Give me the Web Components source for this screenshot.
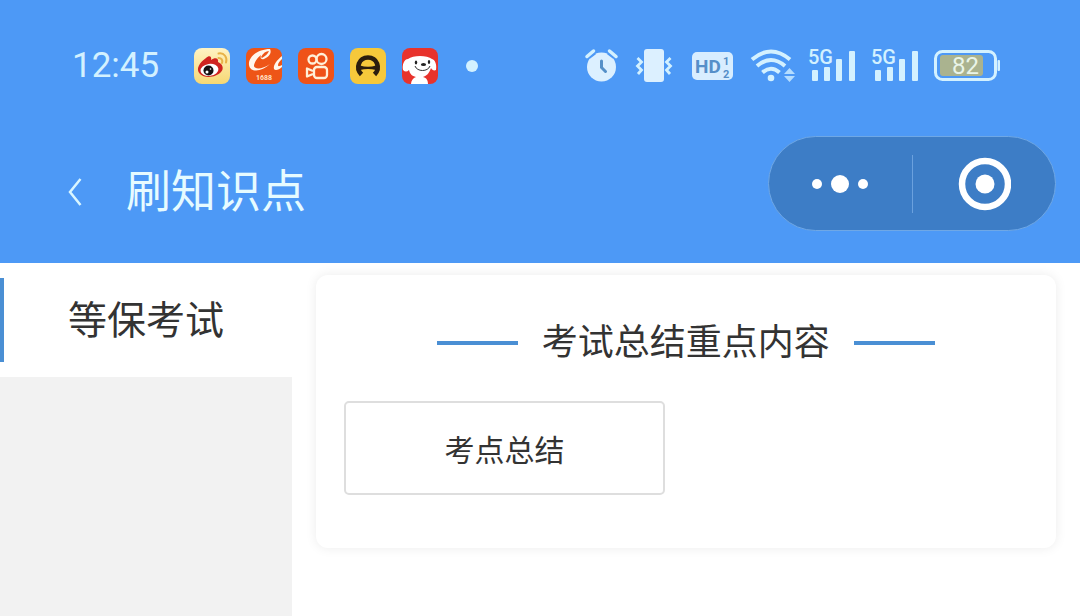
<!DOCTYPE html>
<html lang="zh-CN">
<head>
<meta charset="utf-8">
<meta name="viewport" content="width=device-width, initial-scale=1">
<title>刷知识点</title>
<style>
  :root { --brand: #4d99f6; --ice: #d3f1ff; --accent: #4a8fd4; --ink: #333333; }
  body { margin: 0; background: #ffffff; color: var(--ink); font-family: Roboto, "Noto Sans CJK SC", sans-serif; }
</style>
</head>
<body>
<study-page>
  <status-bar slot="top" time="12:45"></status-bar>
  <nav-header slot="top">刷知识点</nav-header>
  <side-menu slot="side"><side-item>等保考试</side-item></side-menu>
  <topic-card>
    <span slot="heading">考试总结重点内容</span>
    <topic-button>考点总结</topic-button>
  </topic-card>
</study-page>

<script>
const define = (name, html) => {
  const template = document.createElement('template');
  template.innerHTML = html;
  customElements.define(name, class extends HTMLElement {
    constructor() {
      super();
      this.attachShadow({ mode: 'open' }).append(template.content.cloneNode(true));
    }
    connectedCallback() {
      const time = this.shadowRoot.querySelector('time');
      if (time) time.textContent = this.getAttribute('time');
    }
  });
};

define('study-page', `
  <style>
    :host { display: flex; flex-direction: column; min-height: 100vh; }
    header { background: var(--brand); }
    .body { flex: 1; display: flex; }
    aside { flex: 0 0 27%; background: #f2f2f2; }
    main { flex: 1; min-width: 0; padding: 12px 24px; }
  </style>
  <header><slot name="top"></slot></header>
  <div class="body"><aside><slot name="side"></slot></aside><main><slot></slot></main></div>
`);

define('app-icons', `
  <style>
    :host { display: flex; gap: 16px; }
    svg { display: block; width: 36px; height: 36px; }
    text { font: 700 7px Roboto, sans-serif; }
  </style>
  <svg viewBox="0 0 36 36" aria-label="微博">
    <defs><linearGradient id="g" x1="0" y1="0" x2="0" y2="1"><stop offset="0" stop-color="#fff3c4"/><stop offset="1" stop-color="#f6d873"/></linearGradient></defs>
    <rect width="36" height="36" rx="8" fill="url(#g)"/>
    <path d="M12 10c3-3 6-2 5 2 4-3 8-2 7 2 5 2 6 7 3 10-4 5-16 7-21 2-5-5 0-12 6-16z" fill="#d0231f"/>
    <ellipse cx="15.500" cy="22" rx="9" ry="6" fill="#fff" transform="rotate(-8 15 22)"/>
    <circle cx="14.500" cy="22.500" r="5" fill="#151012"/>
    <circle cx="13" cy="24" r="1.500" fill="#fff"/><circle cx="16.500" cy="21" r=".8" fill="#fff"/>
    <path d="M24.500 5.500c6-1 9 4 7.500 9M24.500 10c3 0 4.500 2 3.500 5" fill="none" stroke="#e8b247" stroke-width="2" stroke-linecap="round"/>
  </svg>
  <svg viewBox="0 0 36 36" aria-label="1688">
    <rect width="36" height="36" rx="8" fill="#ee5517"/>
    <path d="M24 1C12 1 2 9 3 17c1 8 13 7 21-1-7 5-15 6-16 2 0-3 3-8 7-11-1 3 0 5 3 4 5-2 8-6 6-10z" fill="#fff7ec"/>
    <path d="M15 9c2-4 5-6 8-6-1 3-4 5-7 7z" fill="#ee5517"/>
    <path d="M36 8c-5 4-9 9-8 13 1 2 5 1 8-2v-2c-2 1-4 2-4 0 0-2 2-4 4-6z" fill="#fff7ec"/>
    <text x="18" y="32" text-anchor="middle" fill="#ffe1c8">1688</text>
  </svg>
  <svg viewBox="0 0 36 36" aria-label="快手">
    <rect width="36" height="36" rx="8" fill="#ef5218"/>
    <g fill="none" stroke="#fff0d8" stroke-width="2.300" stroke-linejoin="round">
      <circle cx="14.500" cy="11.500" r="4"/><circle cx="23.500" cy="11" r="5"/>
      <rect x="16" y="19" width="13" height="11" rx="3"/><path d="M15 23l-6-2.500v8l6-2.500"/>
    </g>
  </svg>
  <svg viewBox="0 0 36 36" aria-label="汽车">
    <rect width="36" height="36" rx="8" fill="#f6c83b"/>
    <path d="M11.500 26.500C5 20 9 9.500 18 9.500s13 10.500 6.500 17" fill="none" stroke="#2b1d0e" stroke-width="4.600"/>
    <path d="M10 17.500q8 2.500 16 0v4.500q-8-2-16 0z" fill="#2b1d0e"/>
  </svg>
  <svg viewBox="0 0 36 36" aria-label="京东">
    <rect width="36" height="36" rx="8" fill="#e8332c"/>
    <path d="M6 11c5-4 19-4 24 0 3 1 5 5 4 11-2 1-4 0-5-2-2 6-5 8-8 9 4 1 5 4 5 7H9c0-3 2-6 5-7-4-1-6-3-7-7-2 2-4 2-6 0-1-5 1-11 5-11z" fill="#fff"/>
    <ellipse cx="14" cy="14.500" rx="1.200" ry="2" fill="#222"/><ellipse cx="27" cy="14" rx="1.200" ry="2" fill="#222"/>
    <ellipse cx="21.500" cy="16.500" rx="2.600" ry="1.500" fill="#222"/>
    <path d="M13 18c2 6 13 6 15 0" fill="none" stroke="#333" stroke-width="1"/>
  </svg>
`);

define('sim-signal', `
  <style>
    :host { display: block; }
    svg { display: block; width: 51px; height: 44px; }
    text { font: 500 20px Roboto, sans-serif; }
  </style>
  <svg viewBox="0 -4 51 44" fill="var(--ice)" aria-label="5G 信号">
    <rect x="4" y="22" width="6" height="11" rx="1"/><rect x="16" y="19" width="6" height="14" rx="1"/>
    <rect x="28" y="11" width="6" height="22" rx="1"/><rect x="41" y="3" width="6" height="30" rx="1"/>
    <text x="0" y="16">5G</text>
  </svg>
`);

define('status-bar', `
  <style>
    :host { display: flex; align-items: center; height: 60px; padding: 36px 80px 0 72px; color: var(--ice); }
    time { font-size: 35px; line-height: 40px; margin-right: 35px; }
    .dot { width: 12px; height: 12px; margin-left: 28px; border-radius: 50%; background: var(--ice); }
    .system { display: flex; align-items: center; gap: 12px; margin-left: auto; }
    svg { display: block; height: 36px; }
    text { font-family: Roboto, sans-serif; }
  </style>
  <time></time>
  <app-icons></app-icons>
  <span class="dot"></span>
  <div class="system">
    <svg width="38" viewBox="0 0 38 36" aria-label="闹钟">
      <circle cx="17.500" cy="19" r="14.500" fill="#dcf0ff"/>
      <path d="M3.500 7.500L9.500 3M31.500 7.500L25.500 3" stroke="var(--brand)" stroke-width="8"/>
      <path d="M3 8.500L9.500 3M32 8.500L25.500 3" stroke="var(--ice)" stroke-width="3.500" stroke-linecap="round"/>
      <path d="M17.500 13v6.500l4 4" fill="none" stroke="#5590c8" stroke-width="3" stroke-linecap="round"/>
    </svg>
    <svg width="46" viewBox="0 0 46 36" aria-label="振动">
      <rect x="10" y="1" width="20" height="33" rx="3" fill="#dcf0ff"/>
      <path d="M3.500 10l4 4-4 4 4 4-3.500 4M36.500 10l-4 4 4 4-4 4 3.500 4" fill="none" stroke="var(--ice)" stroke-width="2.800"/>
    </svg>
    <svg width="46" viewBox="0 0 46 36" aria-label="HD 1 2">
      <rect x="0" y="4" width="41" height="28" rx="5" fill="#d8edff"/>
      <g fill="#568fc9" font-weight="700">
        <text x="3" y="25" font-size="19">HD</text>
        <text x="31" y="17" font-size="11">1</text>
        <text x="31" y="30" font-size="11">2</text>
      </g>
    </svg>
    <svg width="46" viewBox="0 0 46 36" aria-label="无线网络">
      <g fill="none" stroke="var(--ice)" stroke-width="4"><path d="M2 11.500q19-16 38 0M7 18q14-12 28 0M12.500 24.500q8.500-7.500 17 0"/></g>
      <circle cx="21" cy="30" r="3.300" fill="var(--ice)"/>
      <path d="M39.500 20l5.500 6H34zM39.500 34l5.500-6H34z" fill="#b5ddff"/>
    </svg>
    <sim-signal></sim-signal>
    <sim-signal></sim-signal>
    <svg width="66" viewBox="0 0 66 36" aria-label="电量 82">
      <rect x="1.500" y="3.500" width="60" height="28" rx="7" fill="none" stroke="var(--ice)" stroke-width="3"/>
      <rect x="6" y="7" width="43" height="21" rx="3" fill="#aab38f"/>
      <rect x="63.500" y="12" width="2.500" height="11" rx="1" fill="var(--ice)"/>
      <text x="31.500" y="26" text-anchor="middle" font-size="24" fill="#e9f5e8">82</text>
    </svg>
  </div>
`);

define('capsule-menu', `
  <style>
    :host { display: grid; grid-template-columns: 1fr 1px 1fr; align-items: center; box-sizing: border-box; width: 288px; height: 95px; border: 1px solid #6fa8e6; border-radius: 48px; background: #3d7dc6; }
    button { display: grid; place-items: center; height: 100%; padding: 0; border: 0; background: none; }
    i { height: 58px; background: #6ba1de; }
    svg { display: block; }
  </style>
  <button aria-label="更多"><svg width="58" height="20" viewBox="0 0 58 20" fill="#fff"><circle cx="6" cy="10" r="5"/><circle cx="29" cy="10" r="9"/><circle cx="52" cy="10" r="5"/></svg></button>
  <i></i>
  <button aria-label="关闭"><svg width="54" height="54" viewBox="0 0 54 54"><circle cx="28" cy="27" r="23" fill="none" stroke="#fff" stroke-width="6.500"/><circle cx="28" cy="27" r="9.500" fill="#fff"/></svg></button>
`);

define('nav-header', `
  <style>
    :host { display: flex; justify-content: space-between; padding: 40px 24px 32px 64px; }
    .title { display: flex; align-items: center; padding-top: 18px; gap: 38px; }
    button { padding: 0; border: 0; background: none; }
    svg { display: block; }
    h1 { margin: 0; color: #e6fbff; font-size: 45px; line-height: 60px; font-weight: 400; }
  </style>
  <div class="title">
    <button aria-label="返回"><svg width="24" height="32" viewBox="0 0 24 32"><path d="M16.500 2L6 15l10.500 13" fill="none" stroke="#d9f6ff" stroke-width="2.500"/></svg></button>
    <h1><slot></slot></h1>
  </div>
  <capsule-menu></capsule-menu>
`);

define('side-menu', `
  <style>:host { display: block; } nav { display: flex; flex-direction: column; }</style>
  <nav><slot></slot></nav>
`);

define('side-item', `
  <style>
    :host { display: block; padding: 15px 0; background: #fff; }
    a { display: block; box-sizing: border-box; height: 84px; padding: 2px 0 0 64px; border-left: 4px solid var(--accent); color: var(--ink); font-size: 39px; line-height: 82px; text-decoration: none; white-space: nowrap; }
  </style>
  <a href="#" aria-current="page"><slot></slot></a>
`);

define('topic-card', `
  <style>
    :host { display: block; padding: 44px 28px 53px; border-radius: 12px; background: #fff; box-shadow: 0 0 12px rgba(0, 0, 0, .08); }
    h2 { display: flex; align-items: center; justify-content: center; gap: 24px; margin: 0 0 34px; font-size: 36px; line-height: 48px; font-weight: 400; }
    h2::before, h2::after { content: ""; width: 81px; height: 4px; background: var(--accent); }
    .topics { display: grid; grid-template-columns: 47% 47%; justify-content: space-between; }
  </style>
  <h2><slot name="heading"></slot></h2>
  <div class="topics"><slot></slot></div>
`);

define('topic-button', `
  <style>
    :host { display: block; }
    button { box-sizing: border-box; width: 100%; height: 94px; padding: 0; border: 2px solid #dedede; border-radius: 5px; background: #fff; color: var(--ink); font: inherit; font-size: 30px; }
  </style>
  <button><slot></slot></button>
`);
</script>
</body>
</html>
